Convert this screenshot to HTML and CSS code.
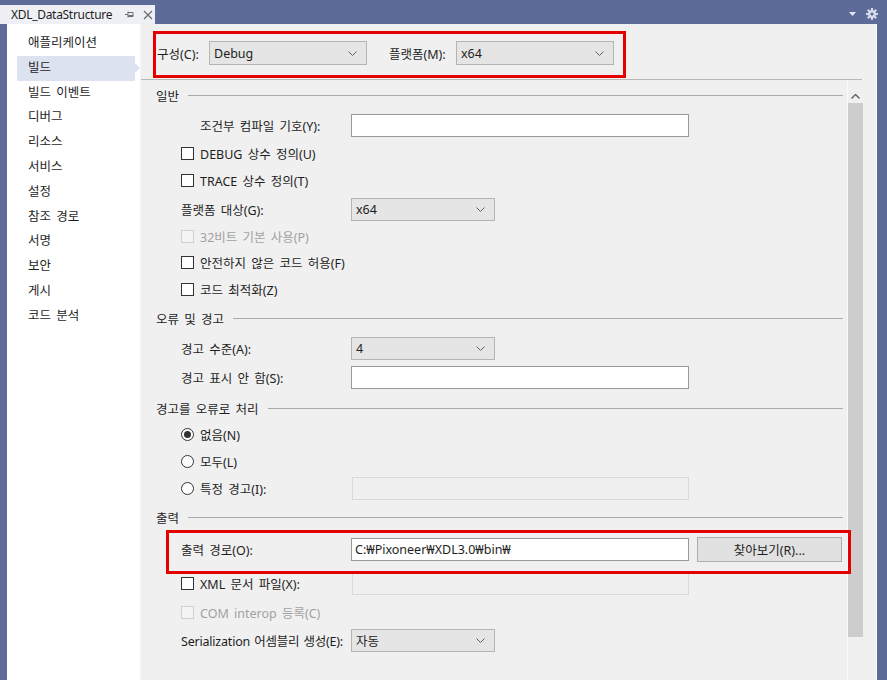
FILE: index.html
```html
<!DOCTYPE html>
<html lang="ko">
<head>
  <meta charset="UTF-8">
  <title>XDL_DataStructure - 빌드</title>
  <link rel="stylesheet" href="styles.css">
</head>
<body>
  <div class="tabbar">
    <div class="doc-tab">
      <span class="doc-title">XDL_DataStructure</span>
      <svg class="pin" width="9" height="9" viewBox="0 0 9 9"><path d="M0 4.5h3M3 1.5v6M3 2.5h5v4H3M3.5 5.5h4.5" fill="none" stroke="#6d6d6d" stroke-width="1"/></svg>
      <svg class="close" width="10" height="10" viewBox="0 0 10 10"><path d="M1 1l8 8M9 1l-8 8" stroke="#6d6d6d" stroke-width="1.3"/></svg>
    </div>
    <div class="tab-tools">
      <svg width="7" height="4" viewBox="0 0 7 4"><path d="M0 0h7L3.5 4z" fill="#e4e8f2"/></svg>
      <svg width="12" height="12" viewBox="0 0 12 12"><g fill="#d6dcea"><circle cx="6" cy="6" r="4"/><rect x="5" y="0" width="2" height="12"/><rect x="0" y="5" width="12" height="2"/><rect x="5" y="0" width="2" height="12" transform="rotate(45 6 6)"/><rect x="5" y="0" width="2" height="12" transform="rotate(-45 6 6)"/></g><circle cx="6" cy="6" r="1.6" fill="#5d6b99"/></svg>
    </div>
  </div>

  <div class="window">
    <nav class="pages">
      <div class="page-item">애플리케이션</div>
      <div class="page-item active">빌드</div>
      <div class="page-item">빌드 이벤트</div>
      <div class="page-item">디버그</div>
      <div class="page-item">리소스</div>
      <div class="page-item">서비스</div>
      <div class="page-item">설정</div>
      <div class="page-item">참조 경로</div>
      <div class="page-item">서명</div>
      <div class="page-item">보안</div>
      <div class="page-item">게시</div>
      <div class="page-item">코드 분석</div>
    </nav>

    <div class="page">
      <div class="config">
        <span class="config-label">구성(C):</span>
        <div class="select wide">Debug<svg class="chev" width="9" height="5" viewBox="0 0 9 5"><path d="M0.5 0.5l4 4 4-4" fill="none" stroke="#606060"/></svg></div>
        <span class="config-label second">플랫폼(M):</span>
        <div class="select wide">x64<svg class="chev" width="9" height="5" viewBox="0 0 9 5"><path d="M0.5 0.5l4 4 4-4" fill="none" stroke="#606060"/></svg></div>
      </div>

      <div class="body">
        <div class="form">
          <div class="sec">일반</div>
          <div class="row field">
            <span class="label indent">조건부 컴파일 기호(Y):</span>
            <div class="textbox"></div>
          </div>
          <div class="row"><span class="check"></span>DEBUG 상수 정의(U)</div>
          <div class="row"><span class="check"></span>TRACE 상수 정의(T)</div>
          <div class="row field">
            <span class="label">플랫폼 대상(G):</span>
            <div class="select">x64<svg class="chev" width="9" height="5" viewBox="0 0 9 5"><path d="M0.5 0.5l4 4 4-4" fill="none" stroke="#606060"/></svg></div>
          </div>
          <div class="row short disabled"><span class="check"></span>32비트 기본 사용(P)</div>
          <div class="row"><span class="check"></span>안전하지 않은 코드 허용(F)</div>
          <div class="row"><span class="check"></span>코드 최적화(Z)</div>

          <div class="sec">오류 및 경고</div>
          <div class="row field">
            <span class="label">경고 수준(A):</span>
            <div class="select">4<svg class="chev" width="9" height="5" viewBox="0 0 9 5"><path d="M0.5 0.5l4 4 4-4" fill="none" stroke="#606060"/></svg></div>
          </div>
          <div class="row field tight">
            <span class="label">경고 표시 안 함(S):</span>
            <div class="textbox"></div>
          </div>

          <div class="sec low">경고를 오류로 처리</div>
          <div class="row"><span class="radio on"></span>없음(N)</div>
          <div class="row"><span class="radio"></span>모두(L)</div>
          <div class="row">
            <span class="label"><span class="radio"></span>특정 경고(I):</span>
            <div class="textbox off"></div>
          </div>

          <div class="sec">출력</div>
          <div class="row loose">
            <span class="label">출력 경로(O):</span>
            <div class="textbox">C:₩Pixoneer₩XDL3.0₩bin₩</div>
            <div class="button">찾아보기(R)...</div>
          </div>
          <div class="row loose">
            <span class="label"><span class="check"></span>XML 문서 파일(X):</span>
            <div class="textbox off"></div>
          </div>
          <div class="row short disabled"><span class="check"></span>COM interop 등록(C)</div>
          <div class="row field">
            <span class="label long">Serialization 어셈블리 생성(E):</span>
            <div class="select">자동<svg class="chev" width="9" height="5" viewBox="0 0 9 5"><path d="M0.5 0.5l4 4 4-4" fill="none" stroke="#606060"/></svg></div>
          </div>
        </div>

        <div class="vscroll">
          <svg class="up" width="9" height="5" viewBox="0 0 9 5"><path d="M0.5 4.5l4-4 4 4" fill="none" stroke="#606060" stroke-width="1.4"/></svg>
          <div class="thumb"></div>
        </div>
      </div>
    </div>

    <!-- red highlight boxes drawn over the screenshot -->
    <div class="mark mark-config"></div>
    <div class="mark mark-output"></div>
  </div>
</body>
</html>
```

FILE: styles.css
```css
body {
  margin: 0;
  width: 887px;
  height: 680px;
  overflow: hidden;
  background-color: #5d6b99;
  font-family: "Noto Sans", "Noto Sans CJK KR", sans-serif;
  font-size: 12.5px;
  word-spacing: 2px;
  color: #1e1e1e;
}

.tabbar {
  height: 24px;
  display: flex;
  align-items: flex-end;
  justify-content: space-between;
}

.doc-tab {
  width: 155px;
  height: 19px;
  background-color: #eef0f5;
  display: flex;
  align-items: center;
  box-sizing: border-box;
  padding-left: 11px;
}

.doc-title {
  font-size: 12px;
  letter-spacing: -0.3px;
  word-spacing: 0;
  margin-right: 13px;
  white-space: nowrap;
}

.pin {
  margin-right: 9px;
  flex-shrink: 0;
}

.close {
  flex-shrink: 0;
}

.tab-tools {
  display: flex;
  align-items: center;
  gap: 10px;
  height: 24px;
  padding-right: 9px;
  padding-top: 4px;
  box-sizing: border-box;
}

.window {
  position: relative;
  display: flex;
  margin-left: 7px;
  width: 870px;
  height: 656px;
}

/* left list of property pages */
.pages {
  width: 133px;
  background-color: #fff;
  padding-top: 7px;
  box-sizing: border-box;
}

.page-item {
  height: 24.8px;
  line-height: 24.8px;
  margin-left: 10px;
  padding-left: 11px;
  width: 118px;
  box-sizing: border-box;
  position: relative;
  white-space: nowrap;
}

.page-item.active {
  background-color: #dde2f1;
}

.page-item.active::after {
  content: "";
  position: absolute;
  right: -5px;
  top: 7px;
  border-left: 5px solid #dde2f1;
  border-top: 5px solid transparent;
  border-bottom: 5px solid transparent;
}

.page {
  flex: 1;
  background-color: #f0f0f0;
  border-left: 1px solid #f5f5f5;
  border-right: 1px solid #fafafa;
  display: flex;
  flex-direction: column;
}

.config {
  height: 56px;
  margin-right: 14px;
  border-bottom: 1px solid #b9b9b9;
  display: flex;
  align-items: center;
  padding-left: 16px;
  padding-top: 3px;
  box-sizing: border-box;
}

.config-label {
  width: 52px;
  white-space: nowrap;
}

.config-label.second {
  margin-left: 22px;
  width: 67px;
}

.body {
  flex: 1;
  display: flex;
  min-height: 0;
}

.form {
  width: 706px;
  padding-right: 4px;
  box-sizing: border-box;
}

.sec {
  height: 30px;
  display: flex;
  align-items: center;
  gap: 9px;
  padding-left: 15px;
}

.sec.low {
  padding-top: 4px;
  box-sizing: border-box;
}

.sec::after {
  content: "";
  flex: 1;
  border-top: 1px solid #a9a9a9;
  margin-top: 1px;
}

.row {
  height: 27px;
  display: flex;
  align-items: center;
  padding-left: 40px;
  white-space: nowrap;
}

.row.field {
  height: 30px;
}

.row.tight {
  height: 28px;
}

.row.short {
  height: 25px;
}

.row.loose {
  height: 34px;
}

.row.disabled {
  color: #a2a2a2;
}

.label {
  width: 170px;
  flex-shrink: 0;
  display: flex;
  align-items: center;
}

.label.indent {
  margin-left: 19px;
  width: 151px;
}

.label.long {
  letter-spacing: -0.2px;
  word-spacing: 1px;
}

.check {
  width: 13px;
  height: 13px;
  box-sizing: border-box;
  border: 1px solid #333;
  background-color: #fff;
  margin-right: 6px;
  flex-shrink: 0;
}

.disabled .check {
  border-color: #cfcfcf;
  background-color: #f4f4f4;
}

.radio {
  width: 13px;
  height: 13px;
  box-sizing: border-box;
  border: 1px solid #333;
  border-radius: 50%;
  background-color: #fff;
  margin-right: 6px;
  flex-shrink: 0;
  position: relative;
}

.radio.on::after {
  content: "";
  position: absolute;
  left: 2px;
  top: 2px;
  width: 7px;
  height: 7px;
  border-radius: 50%;
  background-color: #333;
}

.textbox {
  width: 338px;
  height: 23px;
  box-sizing: border-box;
  border: 1px solid #999;
  background-color: #fff;
  padding-left: 3px;
  line-height: 21px;
  word-spacing: 0;
}

.textbox.off {
  border-color: #dadada;
  background-color: #f0f0f0;
  margin-left: 1px;
  width: 337px;
}

.select {
  width: 144px;
  height: 23px;
  box-sizing: border-box;
  border: 1px solid #b4b4b4;
  background-color: #e5e5e5;
  display: flex;
  align-items: center;
  justify-content: space-between;
  padding: 0 9px 0 4px;
}

.select.wide {
  width: 158px;
  height: 24px;
}

.button {
  width: 145px;
  height: 25px;
  margin-left: 8px;
  box-sizing: border-box;
  border: 1px solid #adadad;
  background-color: #e1e1e1;
  display: flex;
  align-items: center;
  justify-content: center;
}

/* vertical scroll bar */
.vscroll {
  width: 15px;
  border-left: 1px solid #fbfbfb;
  display: flex;
  flex-direction: column;
  align-items: center;
  padding-top: 14px;
}

.vscroll .up {
  margin-bottom: 4px;
}

.thumb {
  width: 15px;
  height: 534px;
  background-color: #cdcdcd;
}

.mark {
  position: absolute;
  border: 3px solid #e50000;
  box-sizing: border-box;
}

.mark-config {
  left: 146px;
  top: 7px;
  width: 473px;
  height: 47px;
}

.mark-output {
  left: 159px;
  top: 506px;
  width: 685px;
  height: 44px;
}
```
